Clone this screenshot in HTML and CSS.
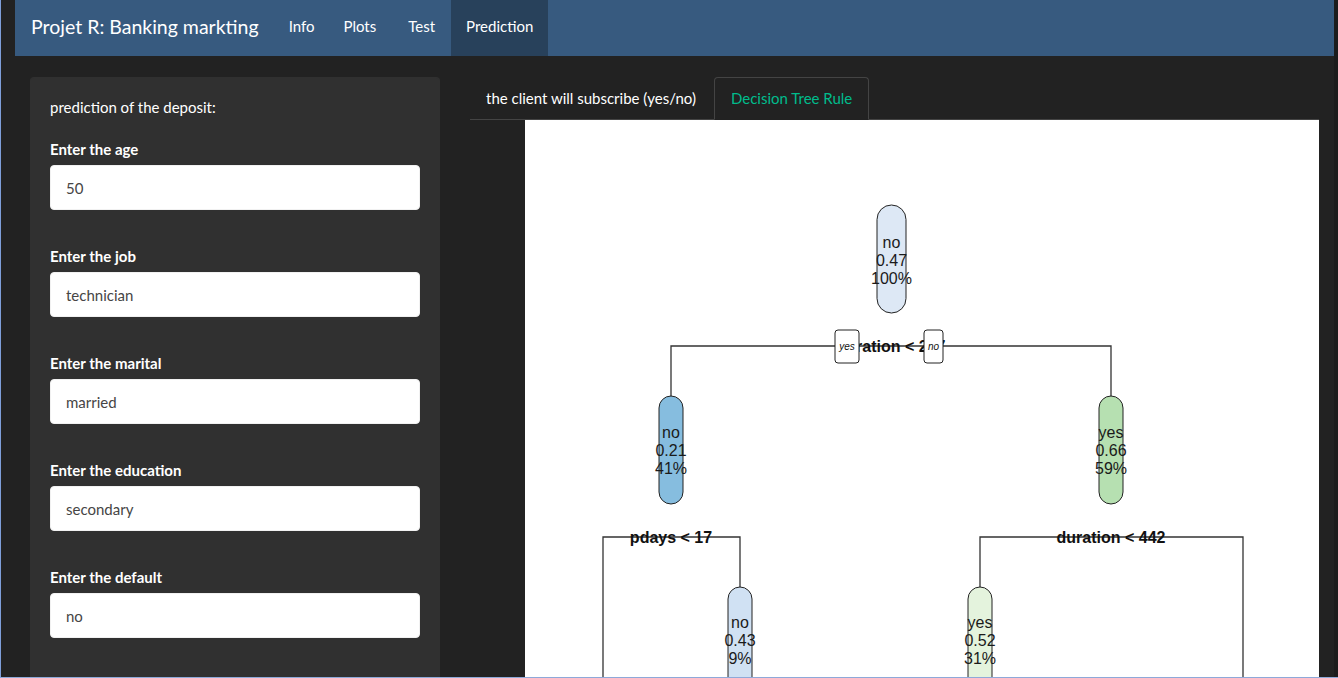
FILE: index.html
```html
<!DOCTYPE html>
<html lang="en">
<head>
<meta charset="utf-8">
<title>Projet R: Banking markting</title>
<link rel="stylesheet" href="styles.css">
</head>
<body>
<div class="page">
  <nav class="navbar">
    <span class="brand">Projet R: Banking markting</span>
    <ul class="nav">
      <li><a>Info</a></li>
      <li><a>Plots</a></li>
      <li class="test"><a>Test</a></li>
      <li class="active"><a>Prediction</a></li>
    </ul>
  </nav>
  <div class="row">
    <aside class="sidebar">
      <div class="well">
        <p class="intro">prediction of the deposit:</p>
        <div class="field"><label>Enter the age</label><input class="control" type="text" value="50"></div>
        <div class="field"><label>Enter the job</label><input class="control" type="text" value="technician"></div>
        <div class="field"><label>Enter the marital</label><input class="control" type="text" value="married"></div>
        <div class="field"><label>Enter the education</label><input class="control" type="text" value="secondary"></div>
        <div class="field"><label>Enter the default</label><input class="control" type="text" value="no"></div>
      </div>
    </aside>
    <main class="main">
      <ul class="tabs">
        <li><a>the client will subscribe (yes/no)</a></li>
        <li class="active"><a>Decision Tree Rule</a></li>
      </ul>
      <div class="plot-wrap">
        <svg class="plot" width="794" height="557" viewBox="0 0 794 557">
          <rect x="0" y="0" width="794" height="557" fill="#ffffff"/>
          <g class="edges" stroke="#333" stroke-width="1.3" fill="none">
            <polyline points="146,276 146,226 586,226 586,276"/>
            <polyline points="78,557 78,417 215,417 215,467"/>
            <polyline points="455,467 455,417 718,417 718,557"/>
          </g>
          <g class="split" font-family="Liberation Sans, Arial, sans-serif" font-size="16" font-weight="bold" fill="#111" text-anchor="middle">
            <text x="366" y="232">duration &lt; 207</text>
            <text x="146" y="423">pdays &lt; 17</text>
            <text x="586" y="423">duration &lt; 442</text>
          </g>
          <g class="yn">
            <rect x="310" y="210" width="24" height="33" rx="3" fill="#fff" stroke="#222" stroke-width="1"/>
            <rect x="399" y="210" width="19" height="33" rx="3" fill="#fff" stroke="#222" stroke-width="1"/>
            <g font-family="Liberation Sans, Arial, sans-serif" font-size="10" font-style="italic" fill="#111" text-anchor="middle">
              <text x="322" y="230">yes</text>
              <text x="408.5" y="230">no</text>
            </g>
          </g>
          <g class="nodes" stroke="#222" stroke-width="1">
            <rect x="352" y="85" width="29" height="108" rx="14.5" fill="#dde8f5"/>
            <rect x="134" y="276" width="24" height="108" rx="12" fill="#86bddf"/>
            <rect x="574" y="276" width="24" height="108" rx="12" fill="#b6e0b1"/>
            <rect x="203" y="467" width="24" height="108" rx="12" fill="#d0e1f3"/>
            <rect x="443" y="467" width="24" height="108" rx="12" fill="#e4f3dd"/>
          </g>
          <g class="labels" font-family="Liberation Sans, Arial, sans-serif" font-size="16" fill="#1a1a1a" text-anchor="middle">
            <text x="366.5" y="128">no</text>
            <text x="366.5" y="146">0.47</text>
            <text x="366.5" y="164">100%</text>
            <text x="146" y="318">no</text>
            <text x="146" y="336">0.21</text>
            <text x="146" y="354">41%</text>
            <text x="586" y="318">yes</text>
            <text x="586" y="336">0.66</text>
            <text x="586" y="354">59%</text>
            <text x="215" y="508">no</text>
            <text x="215" y="526">0.43</text>
            <text x="215" y="544">9%</text>
            <text x="455" y="508">yes</text>
            <text x="455" y="526">0.52</text>
            <text x="455" y="544">31%</text>
          </g>
        </svg>
      </div>
    </main>
  </div>
</div>
<div class="edge"></div>
</body>
</html>
```
FILE: styles.css
```css
html, body {
  margin: 0;
  height: 100%;
}
body {
  box-sizing: border-box;
  height: 678px;
  overflow: hidden;
  display: flex;
  background: #222222;
  border-left: 1px solid #7f9fda;
  border-bottom: 1px solid #8ea9d9;
  font-family: Lato, "Open Sans", sans-serif;
  font-size: 15px;
  line-height: 21px;
  color: #ffffff;
}
.page {
  margin-left: 14px;
  width: 1319px;
  flex: none;
  display: flex;
  flex-direction: column;
}
.edge {
  flex: 1;
  background: #1c1c1c;
}
.navbar {
  display: flex;
  height: 56px;
  flex: none;
  background: #375a7f;
  margin-bottom: 21px;
}
.brand {
  display: flex;
  align-items: center;
  padding: 0 15px 3px 16px;
  font-size: 19.5px;
  color: #ffffff;
  white-space: nowrap;
}
.nav {
  display: flex;
  list-style: none;
  margin: 0;
  padding: 0;
}
.nav li a {
  display: flex;
  align-items: center;
  height: 56px;
  box-sizing: border-box;
  padding: 0 15px 3px;
  color: #ffffff;
}
.nav li:nth-child(2) a {
  padding-left: 14px;
}
.nav li.test a {
  padding-left: 17px;
}
.nav li.active a {
  margin-left: 1px;
  background: #28415b;
}
.row {
  display: flex;
  flex: 1;
  min-height: 0;
}
.sidebar {
  width: 440px;
  box-sizing: border-box;
  padding: 0 15px;
  flex: none;
  display: flex;
  flex-direction: column;
}
.well {
  flex: 1;
  background: #303030;
  border: 1px solid #303030;
  border-bottom: 0;
  border-radius: 4px 4px 0 0;
  padding: 19px;
}
.intro {
  margin: 0 0 21px;
}
.field {
  margin-bottom: 36px;
}
.field label {
  display: block;
  font-weight: bold;
  margin-bottom: 5px;
}
.control {
  display: block;
  box-sizing: border-box;
  width: 100%;
  height: 45px;
  padding: 10px 15px;
  border: 1px solid #f1f1f1;
  border-radius: 4px;
  background: #ffffff;
  color: #464545;
  font: inherit;
  font-size: 15px;
}
.main {
  flex: 1;
  padding: 0 15px;
  min-width: 0;
}
.tabs {
  display: flex;
  list-style: none;
  margin: 0;
  padding: 0;
  border-bottom: 1px solid #444444;
}
.tabs li {
  margin-right: 2px;
  margin-bottom: -1px;
}
.tabs li a {
  display: block;
  padding: 10px 15px;
  border: 1px solid transparent;
  border-radius: 4px 4px 0 0;
  color: #ffffff;
}
.tabs li.active a {
  padding: 10px 16px;
  color: #00bc8c;
  background: #222222;
  border-color: #444444;
  border-bottom-color: transparent;
}
.plot-wrap {
  display: flex;
  justify-content: flex-end;
}
.plot {
  display: block;
}
```
